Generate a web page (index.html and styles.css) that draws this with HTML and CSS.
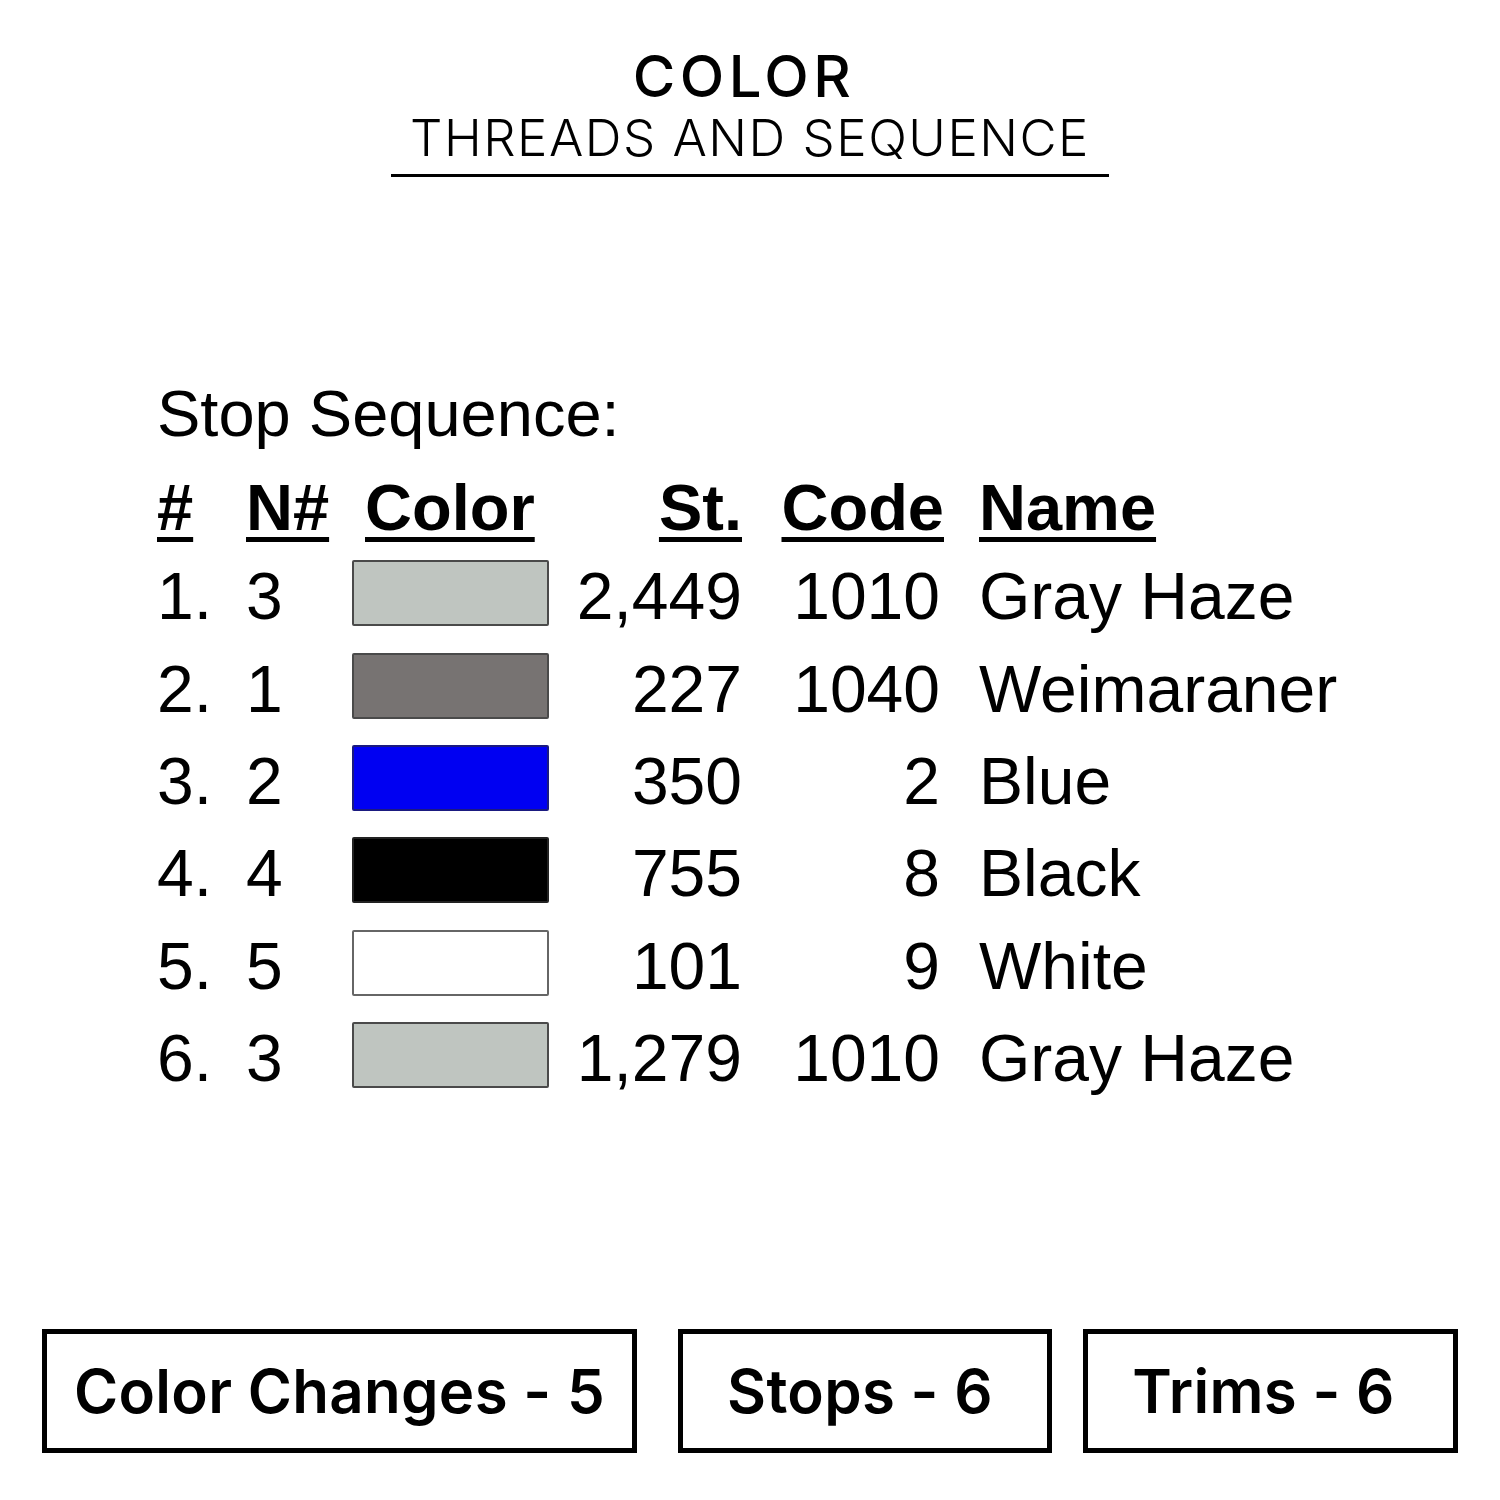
FILE: index.html
```html
<!DOCTYPE html>
<html>
<head>
<meta charset="utf-8">
<link rel="stylesheet" href="styles.css">
</head>
<body>
<div class="page">
  <header class="head">
    <div class="title">COLOR</div>
    <div class="subtitle">THREADS AND SEQUENCE</div>
  </header>

  <section class="seq">
    <div class="seq-title">Stop Sequence:</div>
    <div class="grid">
      <div class="th"><u>#</u></div>
      <div class="th"><u>N#</u></div>
      <div class="th th-color"><u>Color</u></div>
      <div class="th num"><u>St.</u></div>
      <div class="th num"><u>Code</u></div>
      <div class="th name"><u>Name</u></div>

      <div class="td">1.</div><div class="td">3</div><div class="td"><span class="sw sw-haze"></span></div><div class="td num">2,449</div><div class="td num code">1010</div><div class="td name">Gray Haze</div>
      <div class="td">2.</div><div class="td">1</div><div class="td"><span class="sw sw-weim"></span></div><div class="td num">227</div><div class="td num code">1040</div><div class="td name">Weimaraner</div>
      <div class="td">3.</div><div class="td">2</div><div class="td"><span class="sw sw-blue"></span></div><div class="td num">350</div><div class="td num code">2</div><div class="td name">Blue</div>
      <div class="td">4.</div><div class="td">4</div><div class="td"><span class="sw sw-black"></span></div><div class="td num">755</div><div class="td num code">8</div><div class="td name">Black</div>
      <div class="td">5.</div><div class="td">5</div><div class="td"><span class="sw sw-white"></span></div><div class="td num">101</div><div class="td num code">9</div><div class="td name">White</div>
      <div class="td">6.</div><div class="td">3</div><div class="td"><span class="sw sw-haze"></span></div><div class="td num">1,279</div><div class="td num code">1010</div><div class="td name">Gray Haze</div>
    </div>
  </section>

  <footer class="stats">
    <div class="box box-wide">Color Changes - 5</div>
    <div class="box box-mid">Stops - 6</div>
    <div class="box box-right">Trims - 6</div>
  </footer>
</div>
</body>
</html>
```

FILE: styles.css
```css
html, body {
  margin: 0;
  padding: 0;
  background: #fff;
}
.page {
  width: 1500px;
  height: 1500px;
  display: flex;
  flex-direction: column;
  color: #000;
}
.head {
  display: flex;
  flex-direction: column;
  align-items: center;
  padding-top: 44px;
  font-family: Inter, "Open Sans", sans-serif;
}
.title {
  font-size: 58px;
  font-weight: 500;
  letter-spacing: 4.5px;
  line-height: 64px;
  padding-right: 12px;
}
.subtitle {
  font-size: 51px;
  font-weight: 300;
  letter-spacing: 1.5px;
  line-height: 60px;
  padding: 0 19px 6px;
  border-bottom: 3px solid #000;
}
.seq {
  padding-left: 157px;
  margin-top: 200px;
  font-family: "Liberation Sans", Arial, sans-serif;
  font-size: 66px;
}
.seq-title {
  font-size: 65px;
  line-height: 74px;
}
.grid {
  display: grid;
  grid-template-columns: 89px 106px 197px 193px 202px auto;
  grid-template-rows: 96px;
  grid-auto-rows: 92.4px;
  align-items: center;
  margin-top: 0;
}
.th {
  font-weight: bold;
  line-height: 1;
  font-size: 65px;
  padding-top: 16px;
}
.th u {
  text-decoration-thickness: 5px;
  text-underline-offset: 7px;
}
.th-color {
  padding-left: 13px;
}
.td {
  line-height: 1;
  padding-top: 6px;
}
.td:has(.sw) {
  padding-top: 0;
}
.num {
  text-align: right;
}
.name {
  padding-left: 35px;
}
.code {
  padding-right: 4px;
}
.sw {
  display: block;
  width: 197px;
  height: 66px;
  box-sizing: border-box;
  border: 2px solid #4a4a4a;
  border-radius: 2px;
}
.sw-haze { background: #bfc5c0; }
.sw-weim { background: #777372; }
.sw-blue { background: #0000f2; border-color: #1a1a80; }
.sw-black { background: #000; border-color: #222; }
.sw-white { background: #fff; border-color: #666; }

.stats {
  margin-top: auto;
  margin-bottom: 47px;
  display: flex;
  padding-left: 42px;
  font-family: Inter, "Open Sans", sans-serif;
  font-weight: 600;
  font-size: 60px;
  letter-spacing: 0.3px;
}
.box {
  height: 124px;
  box-sizing: border-box;
  border: 5px solid #000;
  display: flex;
  align-items: center;
  justify-content: center;
}
.box-wide { width: 595px; }
.box-mid { width: 374px; margin-left: 41px; padding-right: 10px; }
.box-right { width: 375px; margin-left: 31px; padding-right: 14px; }
```
